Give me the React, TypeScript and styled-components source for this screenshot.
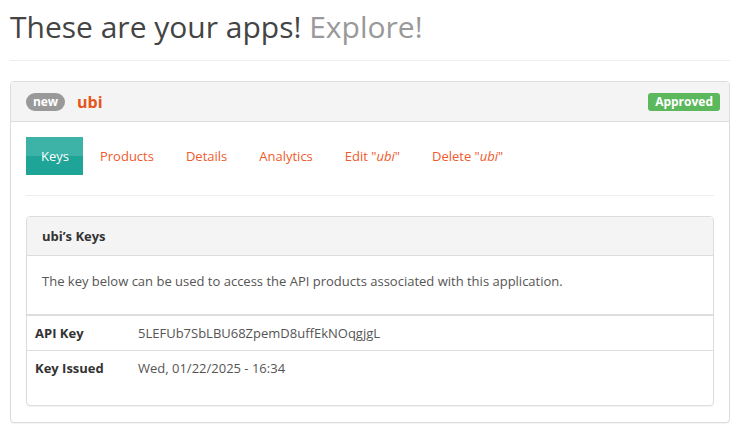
import React from "react";
import styled, { createGlobalStyle } from "styled-components";

const Global = createGlobalStyle`
  html, body { margin: 0; padding: 0; background: #fff; }
  body { font-family: "Open Sans", "Noto Sans", sans-serif; color: #555; font-size: 13px; }
`;

const Page = styled.div`
  padding: 0 13px 0 10px;
`;

const Title = styled.h1`
  margin: 0;
  padding: 5px 0 11px;
  font-size: 30px;
  font-weight: 400;
  line-height: 44px;
  color: #444;
  border-bottom: 1px solid #eee;
  margin-bottom: 20px;
`;

const Muted = styled.span`
  color: #999;
`;

const Panel = styled.div<{ $inner?: boolean }>`
  border: 1px solid #ddd;
  border-radius: 4px;
  background: #fff;
  box-shadow: 0 1px 1px rgba(0, 0, 0, 0.05);
  margin-bottom: ${(p) => (p.$inner ? "0" : "14px")};
  overflow: hidden;
`;

const PanelHeader = styled.div<{ $h: number }>`
  display: flex;
  align-items: center;
  height: ${(p) => p.$h}px;
  padding: 0 9px 0 15px;
  background: #f4f4f4;
  border-bottom: 1px solid #ddd;
  gap: 12px;
`;

const Pill = styled.span`
  display: inline-flex;
  align-items: center;
  justify-content: center;
  height: 18px;
  width: 39px;
  border-radius: 9px;
  background: #999;
  color: #fff;
  font-weight: 700;
  font-size: 12px;
`;

const AppName = styled.span`
  color: #e8541a;
  font-weight: 700;
  font-size: 16px;
  flex: 1;
`;

const Status = styled.span`
  display: inline-flex;
  align-items: center;
  justify-content: center;
  height: 18px;
  padding: 0 7px;
  border-radius: 3px;
  background: #5cb85c;
  color: #fff;
  font-weight: 700;
  font-size: 12px;
`;

const PanelBody = styled.div`
  padding: 15px 15px 16px;
`;

const Tabs = styled.ul`
  list-style: none;
  display: flex;
  margin: 0;
  padding: 0 0 20px;
  border-bottom: 1px solid #eee;
  margin-bottom: 20px;
`;

const Tab = styled.li<{ $active?: boolean }>`
  display: flex;
  align-items: center;
  height: 38px;
  padding: 0 15px;
  margin-right: 2px;
  font-size: 13px;
  color: ${(p) => (p.$active ? "#fff" : "#f05a2c")};
  background: ${(p) =>
    p.$active ? "linear-gradient(to bottom, #3db3a8 0, #3db3a8 50%, #1fa597 50%, #1fa597 100%)" : "transparent"};
  &:first-child { padding-right: 14px; }
  em { font-style: italic; }
`;

const InnerTitle = styled.span`
  font-weight: 700;
  font-size: 13px;
  color: #333;
`;

const Lead = styled.p`
  margin: 0;
  padding: 15px 15px 23px;
  line-height: 20px;
  font-size: 13px;
  color: #555;
`;

const Table = styled.table`
  width: 100%;
  border-collapse: collapse;
  margin-bottom: 20px;
  border-top: 2px solid #ddd;
`;

const Row = styled.tr`
  & + & td, & + & th { border-top: 1px solid #ddd; }
`;

const Label = styled.th`
  text-align: left;
  width: 87px;
  padding: 7px 8px;
  line-height: 20px;
  font-weight: 700;
  color: #333;
  font-size: 13px;
`;

const Value = styled.td`
  padding: 7px 8px;
  line-height: 20px;
  color: #555;
  font-size: 13px;
`;

export default function App() {
  return (
    <>
      <Global />
      <Page>
        <Title>
          These are your apps! <Muted>Explore!</Muted>
        </Title>
        <Panel>
          <PanelHeader $h={39}>
            <Pill>new</Pill>
            <AppName>ubi</AppName>
            <Status>Approved</Status>
          </PanelHeader>
          <PanelBody>
            <Tabs>
              <Tab $active>Keys</Tab>
              <Tab>Products</Tab>
              <Tab>Details</Tab>
              <Tab>Analytics</Tab>
              <Tab>
                Edit "<em>ubi</em>"
              </Tab>
              <Tab>
                Delete "<em>ubi</em>"
              </Tab>
            </Tabs>
            <Panel $inner>
              <PanelHeader $h={38}>
                <InnerTitle>ubi’s Keys</InnerTitle>
              </PanelHeader>
              <Lead>The key below can be used to access the API products associated with this application.</Lead>
              <Table>
                <tbody>
                  <Row>
                    <Label>API Key</Label>
                    <Value>5LEFUb7SbLBU68ZpemD8uffEkNOqgjgL</Value>
                  </Row>
                  <Row>
                    <Label>Key Issued</Label>
                    <Value>Wed, 01/22/2025 - 16:34</Value>
                  </Row>
                </tbody>
              </Table>
            </Panel>
          </PanelBody>
        </Panel>
      </Page>
    </>
  );
}
